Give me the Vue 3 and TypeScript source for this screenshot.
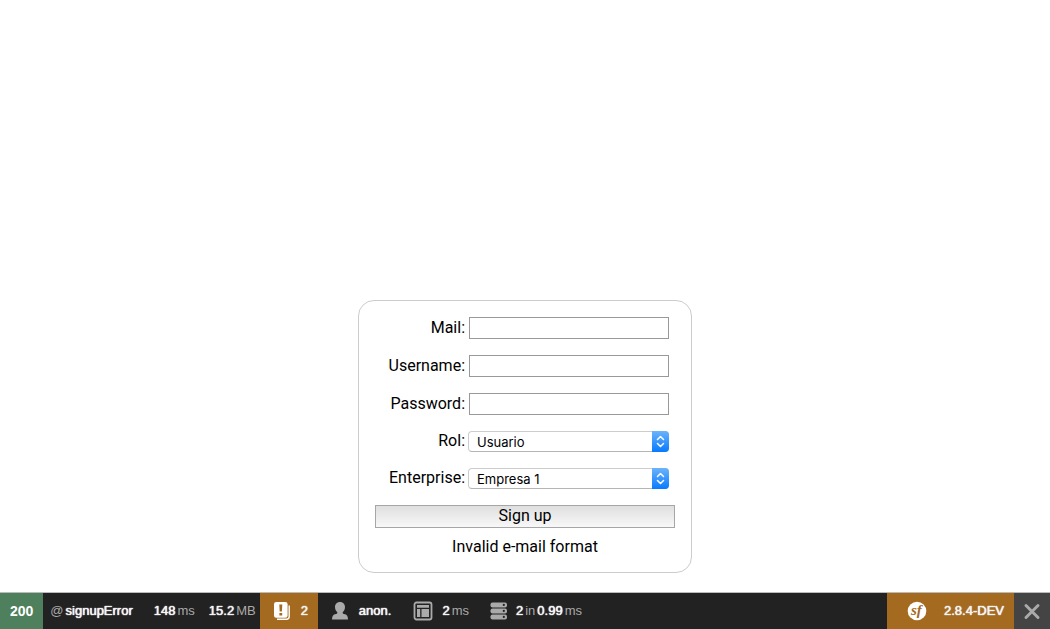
<script setup lang="ts">
import { reactive } from 'vue'

interface Field {
  id: 'mail' | 'username' | 'password'
  label: string
  type: string
}

const fields: Field[] = [
  { id: 'mail', label: 'Mail:', type: 'text' },
  { id: 'username', label: 'Username:', type: 'text' },
  { id: 'password', label: 'Password:', type: 'password' },
]

const form = reactive({
  mail: '',
  username: '',
  password: '',
  role: 'Usuario',
  enterprise: 'Empresa 1',
})
</script>

<template>
  <main class="page">
    <form class="card" @submit.prevent>
      <div v-for="field in fields" :key="field.id" class="row">
        <label :for="field.id">{{ field.label }}</label>
        <input :id="field.id" v-model="form[field.id]" class="text-box" :type="field.type" />
      </div>
      <div class="row choice">
        <label for="role">Rol:</label>
        <span class="select-box">
          <select id="role" v-model="form.role">
            <option>Usuario</option>
          </select>
          <svg class="arrows" viewBox="0 0 17 21" aria-hidden="true">
            <path d="M5.5 8.5 8.5 5.5 11.5 8.5M5.5 12.5 8.5 15.5 11.5 12.5" />
          </svg>
        </span>
      </div>
      <div class="row choice">
        <label for="enterprise">Enterprise:</label>
        <span class="select-box">
          <select id="enterprise" v-model="form.enterprise">
            <option>Empresa 1</option>
          </select>
          <svg class="arrows" viewBox="0 0 17 21" aria-hidden="true">
            <path d="M5.5 8.5 8.5 5.5 11.5 8.5M5.5 12.5 8.5 15.5 11.5 12.5" />
          </svg>
        </span>
      </div>
      <button class="submit" type="submit">Sign up</button>
      <p class="message" role="alert">Invalid e-mail format</p>
    </form>
  </main>

  <footer class="toolbar">
    <a class="block status" href="#">200</a>
    <a class="block request" href="#"><span>@</span><b>signupError</b></a>
    <a class="block time" href="#"><b>148</b><span>ms</span></a>
    <a class="block memory" href="#"><b>15.2</b><span>MB</span></a>
    <a class="block logs" href="#">
      <svg width="18" height="20" viewBox="0 0 18 20" aria-hidden="true">
        <path d="M16.2 4.5V15.5Q16.2 18.2 13.5 18.2H4" fill="none" stroke="#fff" stroke-width="1.4" />
        <rect x="1" y="1" width="13.6" height="15.8" rx="2.2" fill="#fff" />
        <path d="M6.3 3.5H9.3L8.9 10.5H6.7ZM6.4 12H9.2V14.5H6.4Z" fill="#a46a1f" />
      </svg>
      <b>2</b>
    </a>
    <a class="block user" href="#">
      <svg width="16" height="18" viewBox="0 0 16 18" aria-hidden="true">
        <path d="M8 0C4.900 0 3 2.200 3 5.100C3 7.400 4.100 9.400 5.400 10.400C5.400 11.500 4.500 11.700 3 12.200C1 12.800 0 14.200 0 17.500H16C16 14.200 15 12.800 13 12.200C11.500 11.700 10.600 11.500 10.600 10.400C11.900 9.400 13 7.400 13 5.100C13 2.200 11.100 0 8 0Z" fill="#aaa" />
      </svg>
      <b>anon.</b>
    </a>
    <a class="block twig" href="#">
      <svg width="20" height="20" viewBox="0 0 20 20" aria-hidden="true">
        <rect x="1.500" y="1.500" width="17" height="17" rx="2" fill="none" stroke="#aaa" stroke-width="1.800" />
        <path d="M4 4H16V6.700H4ZM4 8H7.200V16H4ZM8.500 8H16V16H8.500Z" fill="#aaa" />
      </svg>
      <span class="pair"><b>2</b><span>ms</span></span>
    </a>
    <a class="block database" href="#">
      <svg width="18" height="18" viewBox="0 0 18 18" aria-hidden="true">
        <g fill="#aaa">
          <rect x="0.500" y="0.500" width="16.500" height="4.900" rx="2" />
          <rect x="0.500" y="6.500" width="16.500" height="4.900" rx="2" />
          <rect x="0.500" y="12.500" width="16.500" height="4.900" rx="2" />
        </g>
        <g fill="#222">
          <circle cx="13.800" cy="2.900" r="1.100" />
          <circle cx="13.800" cy="8.900" r="1.100" />
          <circle cx="13.800" cy="14.900" r="1.100" />
        </g>
      </svg>
      <span class="pair"><b>2</b><span>in</span><b>0.99</b><span>ms</span></span>
    </a>
    <a class="block version" href="#">
      <svg width="20" height="20" viewBox="0 0 20 20" aria-hidden="true">
        <circle cx="10" cy="10" r="9.300" fill="#fff" />
        <text class="logo-text" x="4" y="14">sf</text>
      </svg>
      <b>2.8.4-DEV</b>
    </a>
    <button class="close" type="button" aria-label="Close">
      <svg width="18" height="18" viewBox="0 0 18 18" aria-hidden="true">
        <path d="M3 3.500 15 15.500M15 3.500 3 15.500" fill="none" stroke="#aaa" stroke-width="3" stroke-linecap="round" />
      </svg>
    </button>
  </footer>
</template>

<style>
body {
  margin: 0;
  background: #fff;
}
</style>

<style scoped>
* {
  box-sizing: border-box;
}

.page {
  display: flex;
  justify-content: center;
  padding: 300px 16px 56px;
  font: 16px/20px Roboto, sans-serif;
  color: #000;
}

.card {
  display: flex;
  flex-direction: column;
  gap: 16px;
  width: 334px;
  padding: 16px 16px 15px;
  border: 1px solid #ccc;
  border-radius: 16px;
}

.row {
  display: grid;
  grid-template-columns: 1fr 201px;
  align-items: center;
  gap: 3px;
  padding-right: 6px;
  text-align: right;
}

.choice {
  align-items: start;
}

.text-box {
  justify-self: end;
  width: 200px;
  height: 22px;
  padding: 1px 4px;
  border: 1px solid #999;
  font: inherit;
}

.select-box {
  position: relative;
  display: flex;
  height: 21px;
}

select {
  appearance: none;
  width: 100%;
  padding: 0 24px 0 8px;
  border: 1px solid #ccc;
  border-bottom-color: #b5b5b5;
  border-radius: 4px;
  background: #fff;
  color: #000;
  font: 13px/18px Inter, sans-serif;
}

.arrows {
  position: absolute;
  top: 0;
  right: 0;
  width: 17px;
  height: 21px;
  border-radius: 0 4px 4px 0;
  background: linear-gradient(#6cb3fa, #087aff);
  fill: none;
  stroke: #fff;
  stroke-width: 1.5;
  stroke-linecap: round;
  stroke-linejoin: round;
  pointer-events: none;
}

.submit {
  height: 23px;
  padding: 0 0 2px;
  border: 1px solid #a6a6a6;
  background: linear-gradient(#dfdfdf, #f8f8f8);
  color: #000;
  font: inherit;
}

.message {
  margin: -7px 0 0;
  text-align: center;
}

.toolbar {
  position: fixed;
  right: 0;
  bottom: 0;
  left: 0;
  display: flex;
  height: 37px;
  border-top: 1px solid #bbb;
  background: #222;
  color: #aaa;
  font: 13px/16px "Liberation Sans", Arial, sans-serif;
}

.block,
.pair {
  display: flex;
  align-items: center;
  gap: 2px;
  color: inherit;
  text-decoration: none;
  white-space: nowrap;
}

.block b {
  color: #f5f5f5;
  font-weight: 400;
  text-shadow: 0 0 1px #f5f5f5, 0 0 1px #f5f5f5;
}

.status {
  padding: 0 10px;
  background: #4f805d;
  color: #fff;
  font-size: 14px;
  font-weight: 700;
}

.request {
  padding: 0 13px 0 7px;
}

.time {
  padding: 0 6px 0 8px;
}

.memory {
  padding: 0 4px 0 8px;
}

.logs {
  gap: 10px;
  padding: 0 10px 0 13px;
  background: #a46a1f;
}

.user {
  gap: 11px;
  padding: 0 10px 0 14px;
}

.twig {
  gap: 9px;
  padding: 0 10px 0 12px;
}

.database {
  gap: 8px;
  padding: 0 10px 0 11px;
}

.version {
  gap: 17px;
  margin-left: auto;
  padding: 0 10px 0 20px;
  background: #a46a1f;
}

.logo-text {
  fill: #a46a1f;
  font: italic 700 15px "Liberation Serif", serif;
}

.close {
  display: flex;
  align-items: center;
  justify-content: center;
  width: 36px;
  padding: 0;
  border: 0;
  background: #444;
}
</style>
